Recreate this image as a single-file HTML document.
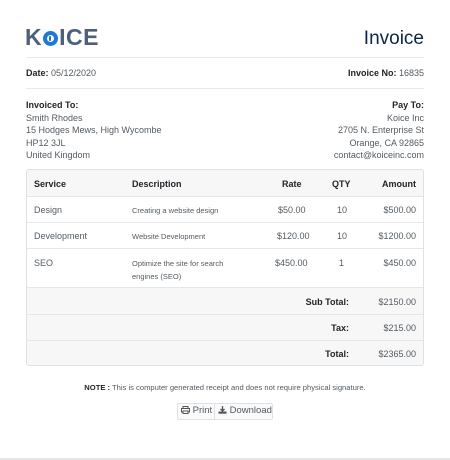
<!DOCTYPE html>
<html><head><style>
*{margin:0;padding:0;box-sizing:border-box}
body{width:450px;height:460px;background:#fff;font-family:"Liberation Sans",sans-serif;color:#535b61;font-size:9px;position:relative;overflow:hidden}
.a{position:absolute;white-space:nowrap}
.r{text-align:right}
b{color:#212529;font-weight:bold}
.hr{position:absolute;left:26px;width:398px;height:1px;background:#e8eaec}
.tbl{position:absolute;left:26px;top:169px;width:398px;height:197px;border:1px solid #dee2e6;border-radius:3px;overflow:hidden}
.row{position:absolute;left:0;width:396px;border-top:1px solid #e4e6e8}
.bg{background:#f7f7f7}
.d{font-size:7.5px}
</style></head><body>
<div class="a" style="left:25px;top:24px;font-size:23px;font-weight:bold;color:#4d6079;letter-spacing:0.5px">K<span style="display:inline-block;width:15px;height:15px;border:4px solid #1c7ad4;border-radius:50%;position:relative;top:1px;margin:0 1px"><span style="position:absolute;left:2px;top:1px;width:2px;height:5px;background:#1c7ad4;border-radius:1px"></span></span>ICE</div>
<div class="a" style="right:26px;top:28px;font-size:19px;color:#0a2647">Invoice</div>
<div class="hr" style="top:57px"></div>
<div class="a" style="left:26px;top:68px"><b>Date:</b> 05/12/2020</div>
<div class="a" style="right:26px;top:68px"><b>Invoice No:</b> 16835</div>
<div class="hr" style="top:88px"></div>
<div class="a" style="left:26px;top:99px;line-height:12.5px"><b>Invoiced To:</b><br>Smith Rhodes<br>15 Hodges Mews, High Wycombe<br>HP12 3JL<br>United Kingdom</div>
<div class="a r" style="right:26px;top:99px;line-height:12.5px"><b>Pay To:</b><br>Koice Inc<br>2705 N. Enterprise St<br>Orange, CA 92865<br>contact@koiceinc.com</div>
<div class="tbl">
 <div class="row bg" style="top:0;height:27px;border:0"></div>
 <div class="a" style="left:7px;top:9px"><b>Service</b></div>
 <div class="a" style="left:105px;top:9px"><b>Description</b></div>
 <div class="a" style="left:255px;top:9px"><b>Rate</b></div>
 <div class="a" style="left:305px;top:9px"><b>QTY</b></div>
 <div class="a" style="right:7px;top:9px"><b>Amount</b></div>
 <div class="row" style="top:26px;height:26px"></div>
 <div class="a" style="left:7px;top:35px">Design</div>
 <div class="a d" style="left:105px;top:36px">Creating a website design</div>
 <div class="a" style="left:251px;top:35px">$50.00</div>
 <div class="a" style="left:310px;top:35px">10</div>
 <div class="a" style="right:7px;top:35px">$500.00</div>
 <div class="row" style="top:52px;height:26px"></div>
 <div class="a" style="left:7px;top:61px">Development</div>
 <div class="a d" style="left:105px;top:62px">Website Development</div>
 <div class="a" style="left:250px;top:61px">$120.00</div>
 <div class="a" style="left:310px;top:61px">10</div>
 <div class="a" style="right:7px;top:61px">$1200.00</div>
 <div class="row" style="top:78px;height:40px"></div>
 <div class="a" style="left:7px;top:88px">SEO</div>
 <div class="a d" style="left:105px;top:88px;line-height:12.5px">Optimize the site for search<br>engines (SEO)</div>
 <div class="a" style="left:248px;top:88px">$450.00</div>
 <div class="a" style="left:312px;top:88px">1</div>
 <div class="a" style="right:7px;top:88px">$450.00</div>
 <div class="row bg" style="top:117px;height:80px"></div>
 <div class="row" style="top:144px"></div>
 <div class="row" style="top:170px"></div>
 <div class="a r" style="right:74px;top:127px"><b>Sub Total:</b></div>
 <div class="a" style="right:7px;top:127px">$2150.00</div>
 <div class="a r" style="right:74px;top:153px"><b>Tax:</b></div>
 <div class="a" style="right:7px;top:153px">$215.00</div>
 <div class="a r" style="right:74px;top:179px"><b>Total:</b></div>
 <div class="a" style="right:7px;top:179px">$2365.00</div>
</div>
<div class="a" style="left:0;width:450px;text-align:center;top:383px;font-size:7.6px"><b>NOTE :</b> This is computer generated receipt and does not require physical signature.</div>
<div class="a" style="left:177px;top:403px;width:96px;height:17px;border:1px solid #dee2e6;border-radius:2px;background:#fafafa;font-size:9.5px">
 <div class="a" style="left:0;top:0;width:37px;height:15px;border-right:1px solid #dee2e6;padding:1px 0 0 3px"><svg width="9" height="8" viewBox="0 0 9 8" style="vertical-align:-1px"><rect x="2" y="0.5" width="5" height="2" fill="none" stroke="#555" stroke-width="1"/><rect x="0.5" y="2.5" width="8" height="3.5" fill="none" stroke="#555" stroke-width="1"/><rect x="2" y="5" width="5" height="2.5" fill="#fff" stroke="#555" stroke-width="1"/></svg> Print</div>
 <div class="a" style="left:40px;top:1px"><svg width="9" height="8" viewBox="0 0 9 8" style="vertical-align:-1px"><path d="M4.5 0v5M2.5 3l2 2 2-2" stroke="#555" stroke-width="1.3" fill="none"/><rect x="0.5" y="5.5" width="8" height="2.2" fill="#555"/></svg> Download</div>
</div>
<div class="a" style="left:0;top:458px;width:450px;height:2px;background:#e6e6e6"></div>
</body></html>
